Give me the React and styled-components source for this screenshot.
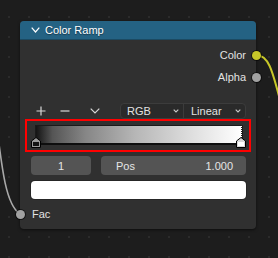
import React from "react";
import styled, { createGlobalStyle } from "styled-components";

const GlobalStyle = createGlobalStyle`
  html, body { margin: 0; padding: 0; background: #1d1d1d; }
  body { font-family: "Liberation Sans", Arial, sans-serif; }
  * { box-sizing: border-box; }
`;

const Canvas = styled.div`
  position: relative;
  width: 278px;
  height: 258px;
  overflow: hidden;
  padding: 21px 0 0 20px;
  background-color: #1d1d1d;
  background-image: radial-gradient(circle, #2b2b2b 0.9px, transparent 1.3px);
  background-size: 20px 20px;
  background-position: -1px 7px;
`;

const Links = styled.svg`
  position: absolute;
  left: 0;
  top: 0;
  width: 278px;
  height: 258px;
  pointer-events: none;
`;

const Node = styled.div`
  position: relative;
  z-index: 1;
  width: 236px;
  height: 208px;
  background: #303030;
  border-radius: 4px;
  box-shadow: 0 1px 3px rgba(0, 0, 0, 0.55);
  display: flex;
  flex-direction: column;
  font-size: 11px;
  color: #e2e2e2;
`;

const Header = styled.div`
  height: 19px;
  background: #246283;
  border-bottom: 1px solid #1b4a62;
  border-radius: 4px 4px 0 0;
  display: flex;
  align-items: center;
  padding-left: 11px;
  gap: 5px;
  color: #ffffff;
  text-shadow: 0 1px 1px rgba(0, 0, 0, 0.45);
`;

const Body = styled.div`
  display: flex;
  flex-direction: column;
  padding: 4px 0 4px 0;
`;

const SocketRow = styled.div`
  position: relative;
  height: 22px;
  display: flex;
  align-items: center;
  justify-content: ${(p) => (p.$side === "out" ? "flex-end" : "flex-start")};
  padding: ${(p) => (p.$side === "out" ? "0 10px 0 0" : "0 0 0 12px")};
  margin-top: ${(p) => p.$mt || 0}px;
`;

const Socket = styled.span`
  position: absolute;
  top: 50%;
  ${(p) => (p.$side === "out" ? "right: -4.5px;" : "left: -4.5px;")}
  width: 9px;
  height: 9px;
  margin-top: -4.5px;
  border-radius: 50%;
  background: ${(p) => p.$color};
  box-shadow: 0 0 0 1px rgba(0, 0, 0, 0.55);
`;

const Toolbar = styled.div`
  height: 16px;
  margin-top: 15px;
  padding: 0 10px 0 16px;
  display: flex;
  align-items: center;
`;

const ToolIcon = styled.svg`
  flex: none;
  margin-left: ${(p) => p.$ml || 0}px;
`;

const Dropdowns = styled.div`
  margin-left: auto;
  width: 126px;
  height: 16px;
  display: flex;
  background: #2a2a2a;
  border: 1px solid #3c3c3c;
  border-radius: 4px;
  overflow: hidden;
`;

const Dropdown = styled.div`
  flex: ${(p) => p.$w ? `0 0 ${p.$w}px` : "1"};
  display: flex;
  align-items: center;
  justify-content: space-between;
  padding: 0 4px 0 ${(p) => p.$pl}px;
  color: #e2e2e2;
  & + & {
    border-left: 1px solid #3c3c3c;
  }
`;

const Highlight = styled.div`
  height: 33px;
  margin: 0 5px;
  border: 2px solid #ff0000;
  padding: 4px 6px 2px 8px;
`;

const Ramp = styled.div`
  position: relative;
  height: 23px;
`;

const Gradient = styled.div`
  height: 20px;
  border: 1px solid #1a1a1a;
  border-bottom: 2px solid #0e0e0e;
  background: linear-gradient(
    to right,
    #141414 0%,
    #555555 8%,
    #868686 24%,
    #b6b6b6 48%,
    #dcdcdc 74%,
    #ffffff 100%
  );
`;

const ActiveLine = styled.div`
  position: absolute;
  right: 1px;
  top: 0;
  height: 13px;
  width: 1px;
  background: repeating-linear-gradient(
    to bottom,
    #222 0px,
    #222 1px,
    #fff 1px,
    #fff 2px
  );
`;

const Marker = styled.svg`
  position: absolute;
  bottom: 0;
  ${(p) => (p.$pos === "left" ? "left: -4px;" : "right: -3px;")}
`;

const FieldRow = styled.div`
  display: flex;
  gap: 10px;
  margin-top: 4px;
  padding: 0 10px 0 11px;
`;

const Field = styled.div`
  height: 19px;
  border-radius: 4px;
  background: #545454;
  display: flex;
  align-items: center;
  justify-content: ${(p) => (p.$center ? "center" : "space-between")};
  padding: ${(p) => (p.$center ? "0" : "0 13px 0 15px")};
  ${(p) => (p.$w ? `flex: 0 0 ${p.$w}px;` : "flex: 1;")}
  color: #e6e6e6;
`;

const Swatch = styled.div`
  height: 18px;
  margin: 6px 10px 0 11px;
  background: #ffffff;
  border-radius: 4px;
  box-shadow: 0 0 0 1px #262626;
`;

const Chevron = ({ w = 9, h = 5, color = "#fff", sw = 1.2 }) => (
  <svg width={w} height={h + 1} viewBox={`0 0 ${w} ${h + 1}`}>
    <polyline
      points={`0.7,0.7 ${w / 2},${h} ${w - 0.7},0.7`}
      fill="none"
      stroke={color}
      strokeWidth={sw}
    />
  </svg>
);

export default function App() {
  return (
    <>
      <GlobalStyle />
      <Canvas>
        <Links viewBox="0 0 278 258">
          <path
            d="M 256 55 C 268 55, 272 68, 281 104"
            fill="none"
            stroke="#c7c729"
            strokeWidth="2"
          />
          <path
            d="M -4 120 C 2 170, 6 205, 20 214"
            fill="none"
            stroke="#a8a8a8"
            strokeWidth="1.6"
          />
        </Links>
        <Node>
          <Header>
            <Chevron w={9} h={5} color="#ffffff" />
            <span>Color Ramp</span>
          </Header>
          <Body>
            <SocketRow $side="out">
              Color
              <Socket $side="out" $color="#c7c729" />
            </SocketRow>
            <SocketRow $side="out">
              Alpha
              <Socket $side="out" $color="#a1a1a1" />
            </SocketRow>

            <Toolbar>
              <ToolIcon width="10" height="10" viewBox="0 0 10 10">
                <path d="M5 0.5 V9.5 M0.5 5 H9.5" stroke="#d8d8d8" strokeWidth="1.2" />
              </ToolIcon>
              <ToolIcon $ml={14} width="10" height="10" viewBox="0 0 10 10">
                <path d="M0.5 5 H9.5" stroke="#d8d8d8" strokeWidth="1.2" />
              </ToolIcon>
              <ToolIcon $ml={20} width="10" height="6" viewBox="0 0 10 6">
                <polyline points="0.7,0.7 5,5 9.3,0.7" fill="none" stroke="#d8d8d8" strokeWidth="1.2" />
              </ToolIcon>
              <Dropdowns>
                <Dropdown $w={62} $pl={6}>
                  <span>RGB</span>
                  <Chevron w={6} h={3} color="#c8c8c8" sw={1.1} />
                </Dropdown>
                <Dropdown $pl={7}>
                  <span>Linear</span>
                  <Chevron w={6} h={3} color="#c8c8c8" sw={1.1} />
                </Dropdown>
              </Dropdowns>
            </Toolbar>

            <Highlight>
              <Ramp>
                <Gradient />
                <ActiveLine />
                <Marker $pos="left" width="10" height="11" viewBox="0 0 10 11">
                  <polygon points="0.5,4 5,0.5 9.5,4 9.5,10.5 0.5,10.5" fill="#9a9a9a" stroke="#000" strokeWidth="1" />
                  <rect x="2" y="5" width="6" height="4" fill="#141414" />
                </Marker>
                <Marker $pos="right" width="10" height="11" viewBox="0 0 10 11">
                  <polygon points="0.5,4 5,0.5 9.5,4 9.5,10.5 0.5,10.5" fill="#d8d8d8" stroke="#000" strokeWidth="1" />
                  <rect x="2" y="5" width="6" height="4" fill="#ffffff" />
                </Marker>
              </Ramp>
            </Highlight>

            <FieldRow>
              <Field $center $w={60}>1</Field>
              <Field>
                <span>Pos</span>
                <span>1.000</span>
              </Field>
            </FieldRow>
            <Swatch />
            <SocketRow $side="in" $mt={4}>
              Fac
              <Socket $side="in" $color="#a1a1a1" />
            </SocketRow>
          </Body>
        </Node>
      </Canvas>
    </>
  );
}
